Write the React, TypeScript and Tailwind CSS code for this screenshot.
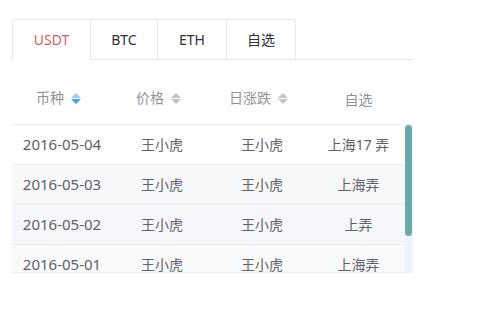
import React from "react";

const tabs = [
  { t: "USDT", w: "w-[77px]" },
  { t: "BTC", w: "w-[67px]" },
  { t: "ETH", w: "w-[69px]" },
  { t: "自选", w: "w-[69px]" },
];
const rows = [
  { date: "2016-05-04", a: "王小虎", b: "王小虎", c: "上海17 弄", bg: "bg-white" },
  { date: "2016-05-03", a: "王小虎", b: "王小虎", c: "上海弄", bg: "bg-[#f7f8fa]" },
  { date: "2016-05-02", a: "王小虎", b: "王小虎", c: "上弄", bg: "bg-[#f5f7fa]" },
  { date: "2016-05-01", a: "王小虎", b: "王小虎", c: "上海弄", bg: "bg-[#f9fafc]" },
];

function Sort({ active }: { active?: boolean }) {
  return (
    <span className="w-[24px] h-[20px] flex flex-col items-center justify-center gap-[1px]">
      <svg width="10" height="5" viewBox="0 0 10 5">
        <path d="M0 5 L5 0 L10 5 Z" fill={active ? "#9fcdf7" : "#c0c4cc"} />
      </svg>
      <svg width="10" height="5" viewBox="0 0 10 5">
        <path d="M0 0 L10 0 L5 5 Z" fill={active ? "#409eff" : "#c0c4cc"} />
      </svg>
    </span>
  );
}

export default function App() {
  return (
    <div
      className="w-[486px] h-[325px] bg-white pt-[19px] pl-[12px]"
      style={{ fontFamily: '"Noto Sans", "Noto Sans CJK SC", sans-serif' }}
    >
      <div className="w-[401px] flex border-b border-[#e4e7ed]">
        <div className="flex border border-b-0 border-[#e4e7ed] rounded-t-[4px] -mb-px">
          {tabs.map((t, i) => (
            <div
              key={t.t}
              className={
                "h-[40px] flex items-center justify-center text-[14px] leading-[20px] border-b " +
                t.w +
                " " +
                (i > 0 ? "border-l border-l-[#e4e7ed] " : "") +
                (i === 0 ? "text-[#d6636b] border-b-white" : "text-[#303133] border-b-[#e4e7ed]")
              }
            >
              {t.t}
            </div>
          ))}
        </div>
      </div>

      <div className="w-[401px]">
        <div className="flex border-b border-[#ebeef5] pt-[28px] pb-[16px] text-[14px] leading-[20px] text-[#909399]">
          <div className="w-[100px] flex items-center justify-center">
            <span>币种</span>
            <Sort active />
          </div>
          <div className="w-[100px] flex items-center justify-center">
            <span>价格</span>
            <Sort />
          </div>
          <div className="w-[100px] flex items-center justify-center">
            <span>日涨跌</span>
            <Sort />
          </div>
          <div className="w-[93px] flex items-center justify-center">
            <span className="translate-y-[2px]">自选</span>
          </div>
        </div>

        <div className="flex h-[148px] overflow-hidden border-b border-[#ebeef5]">
          <div className="w-[393px]">
            {rows.map((r) => (
              <div
                key={r.date}
                className={"flex h-[40px] items-center border-b border-[#ebeef5] text-[14px] text-[#606266] " + r.bg}
              >
                <div className="w-[100px] text-center text-[15px]">{r.date}</div>
                <div className="w-[100px] text-center">{r.a}</div>
                <div className="w-[100px] text-center">{r.b}</div>
                <div className="w-[93px] text-center">{r.c}</div>
              </div>
            ))}
          </div>
          <div className="w-[8px] flex flex-col bg-[#eaf4fc]">
            <div className="h-[111px] w-[7px] rounded-[4px] bg-[#6aa9ad]" />
          </div>
        </div>
      </div>
    </div>
  );
}
